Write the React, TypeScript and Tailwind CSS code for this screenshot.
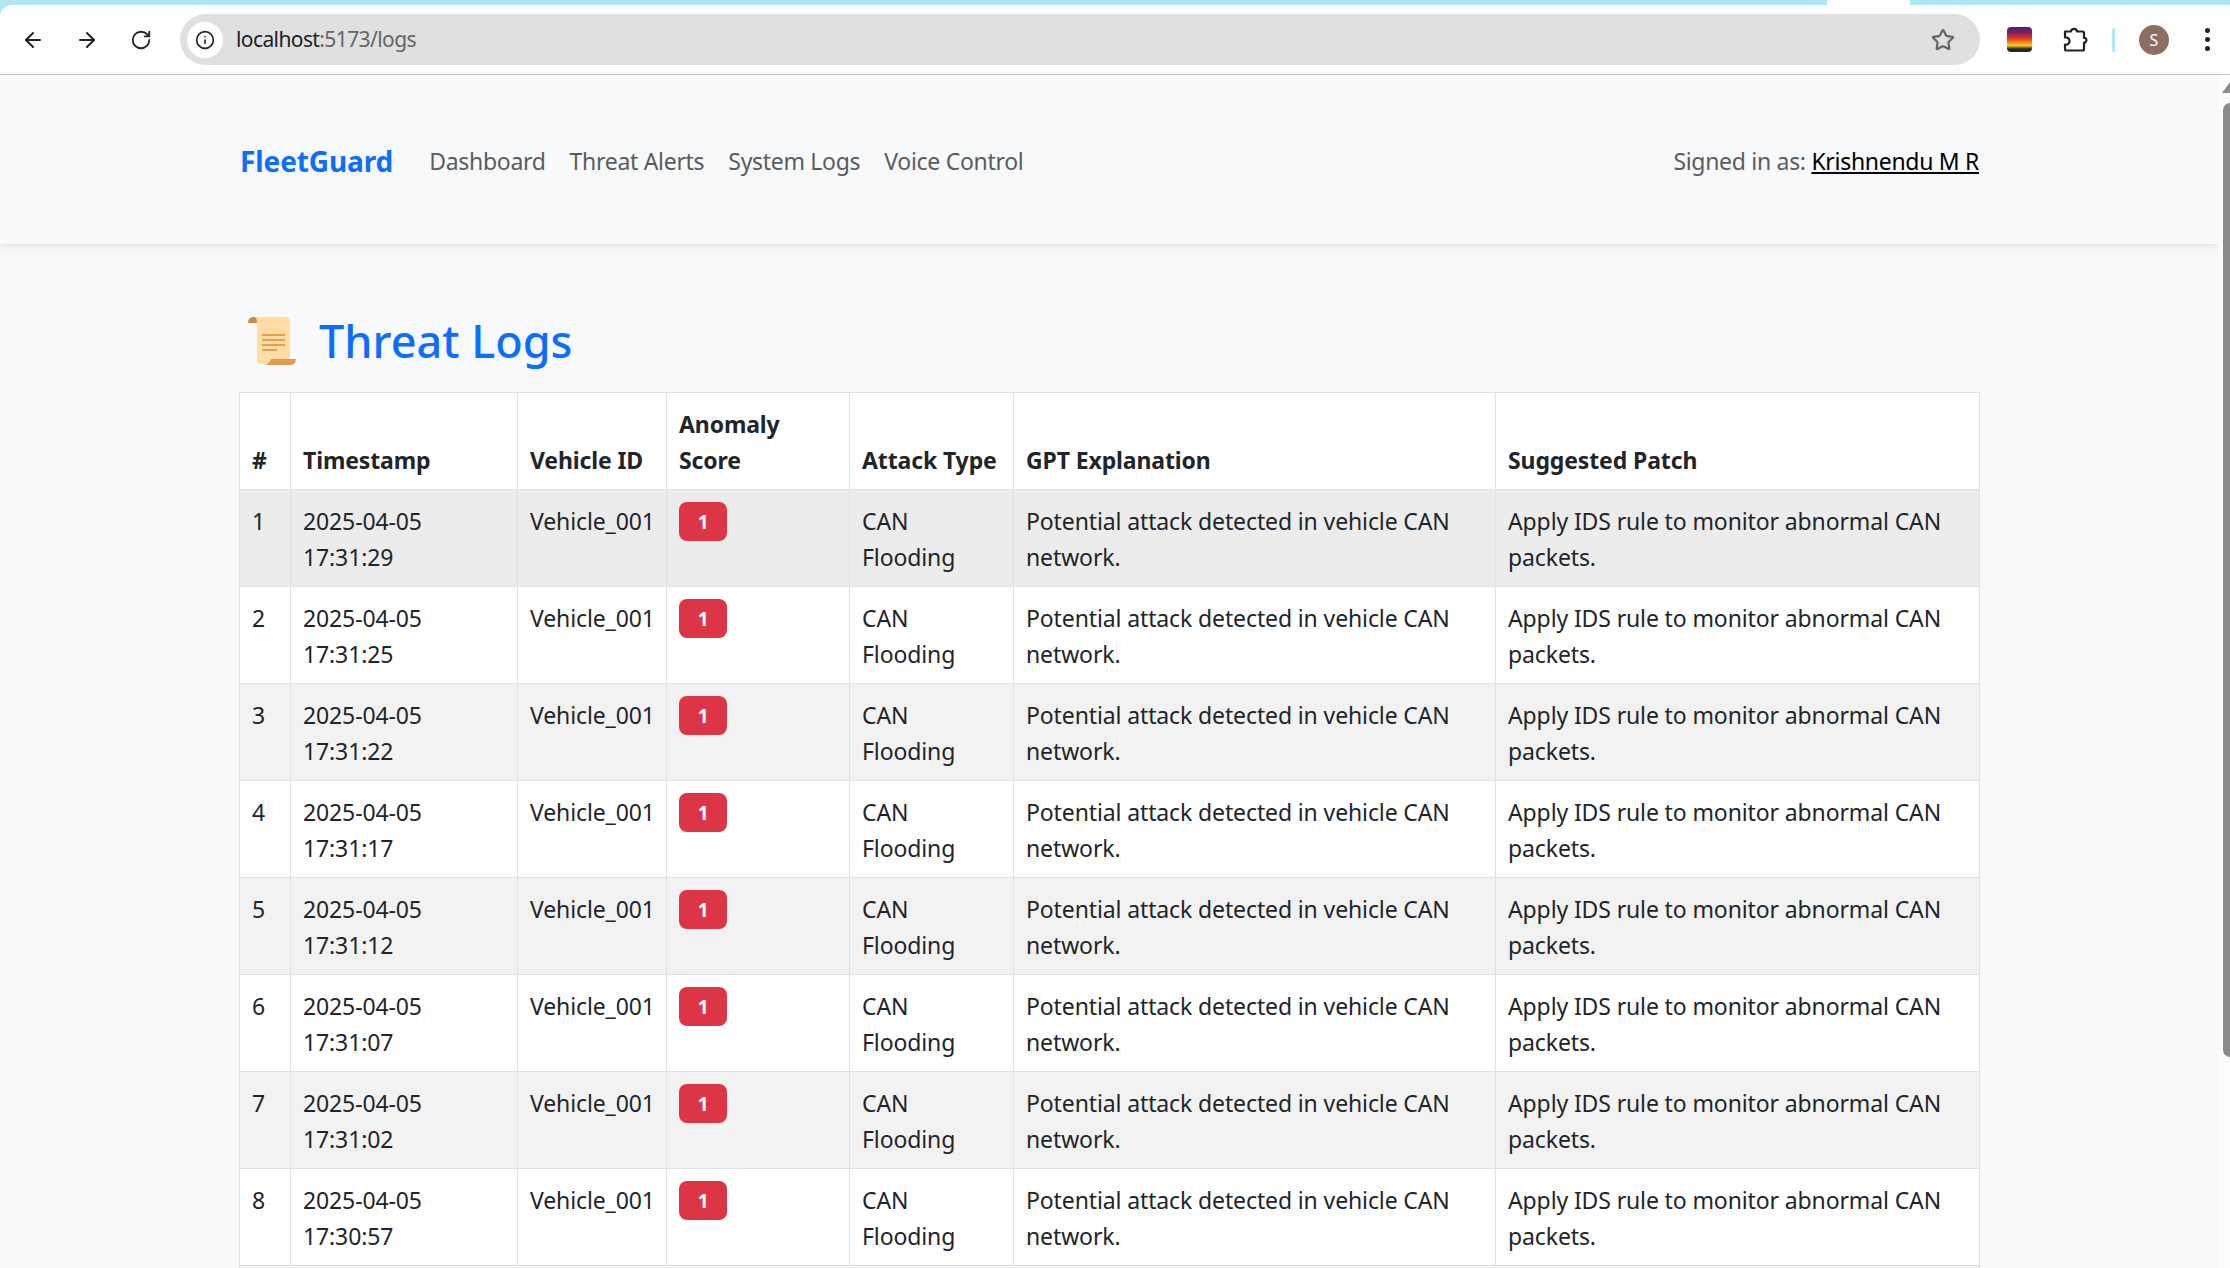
import { ArrowLeft, ArrowRight, RotateCw, Info, Star } from 'lucide-react';

const logs = [
  { id: 1, time: '17:31:29' },
  { id: 2, time: '17:31:25' },
  { id: 3, time: '17:31:22' },
  { id: 4, time: '17:31:17' },
  { id: 5, time: '17:31:12' },
  { id: 6, time: '17:31:07' },
  { id: 7, time: '17:31:02' },
  { id: 8, time: '17:30:57' },
];

function ScrollIcon() {
  return (
    <svg width="48" height="48" viewBox="0 0 48 48" className="shrink-0">
      <path d="M4 0h33a5 5 0 0 1 5 5v42H13a4 4 0 0 1-4-4V6z" fill="#ffdca3" />
      <path d="M0 6c0-4 3-6 5-6 3 0 4 2 4 6z" fill="#c98a4b" />
      <path d="M17 48c3-1 5-3 6-6h25c0 3-2 6-5 6z" fill="#e19a4d" />
      <path d="M14 18h23M14 23h23M14 28h23M14 33h15" stroke="#d98c3e" strokeWidth="1.7" />
    </svg>
  );
}

function ExtensionIcon() {
  return (
    <svg width="26" height="26" viewBox="0 0 26 26" className="shrink-0">
      <path
        d="M2 4.5h6c.4-3.5 5.6-3.5 6 0h5.5A1.5 1.5 0 0 1 21 6v5c3.200-.5 3.200 5 0 4.500V22a1.500 1.500 0 0 1-1.500 1.500H3.500A1.500 1.500 0 0 1 2 22v-4.500c3 .5 4.500-1.500 4.500-3.500S5 10.200 2 10.500z"
        fill="none"
        stroke="#222"
        strokeWidth="2.200"
        strokeLinejoin="round"
      />
    </svg>
  );
}

export default function App() {
  const td = 'border border-[#dee2e6] px-3 pt-[13px] pb-[11px] align-top';
  const th = 'border border-[#dee2e6] px-3 pt-[13px] pb-[11px] align-bottom text-left font-bold';

  return (
    <div className="h-screen overflow-hidden bg-[#f8f9fa] text-[#212529] font-['Noto_Sans','Open_Sans',sans-serif] flex flex-col">
      {/* Browser chrome */}
      <div className="h-[75px] shrink-0 bg-[#b3e6f3] flex flex-col">
        <div className="h-[5px] flex">
          <div className="w-[1827px] rounded-br-md bg-[#b3e6f3]" />
          <div className="w-[83px] bg-white" />
          <div className="flex-1 rounded-bl-md bg-[#b3e6f3]" />
        </div>
        <div className="flex-1 flex items-center bg-white rounded-tl-xl border-b border-[#c9c9c9] pl-[21px]">
          <ArrowLeft size={24} strokeWidth={2} className="text-[#222]" />
          <ArrowRight size={24} strokeWidth={2} className="ml-[30px] text-[#222]" />
          <RotateCw size={22} strokeWidth={2} className="ml-[31px] text-[#222]" />
          <div className="ml-[28px] w-[1800px] h-[51px] rounded-full bg-[#e0e0e0] flex items-center pl-[7px] pr-[25px]">
            <div className="w-[36px] h-[36px] rounded-full bg-white flex items-center justify-center">
              <Info size={20} className="text-[#222]" />
            </div>
            <span className="ml-[13px] text-[21px] tracking-[-0.6px]">
              <span className="text-[#222]">localhost</span>
              <span className="text-[#666]">:5173/logs</span>
            </span>
            <Star size={24} strokeWidth={2.2} className="ml-auto text-[#666]" />
          </div>
          <div className="ml-[27px] w-[25px] h-[25px] rounded-sm bg-[linear-gradient(#4c1d80_0%,#7a2060_20%,#d0312d_42%,#f97316_58%,#facc15_74%,#1f2937_88%)]" />
          <div className="ml-[31px]">
            <ExtensionIcon />
          </div>
          <div className="ml-[23px] w-[3px] h-[24px] rounded-full bg-[#b3e6f3]" />
          <div className="ml-[24px] w-[30px] h-[30px] rounded-full bg-[#8d6e63] text-white text-base flex items-center justify-center">
            S
          </div>
          <div className="ml-[36px] flex flex-col gap-[4px]">
            <span className="w-[5px] h-[5px] rounded-full bg-[#222]" />
            <span className="w-[5px] h-[5px] rounded-full bg-[#222]" />
            <span className="w-[5px] h-[5px] rounded-full bg-[#222]" />
          </div>
        </div>
      </div>

      <div className="flex-1 min-h-0 flex">
        <div className="flex-1 min-w-0">
          {/* Navbar */}
          <nav className="h-[169px] shadow-[0_2px_8px_rgba(0,0,0,0.1)] pl-[240px] pr-[239px] pt-[68px] flex items-start justify-between text-[23px] tracking-[-0.3px] leading-[36px]">
            <div className="flex items-center">
              <a className="text-[28px] font-bold tracking-[-0.1px] text-[#0d6efd] mr-[36px]">FleetGuard</a>
              <a className="text-[#595c5f] mr-[24px]">Dashboard</a>
              <a className="text-[#595c5f] mr-[24px]">Threat Alerts</a>
              <a className="text-[#595c5f] mr-[24px]">System Logs</a>
              <a className="text-[#595c5f]">Voice Control</a>
            </div>
            <div className="text-[#595c5f]">
              Signed in as: <a className="text-black underline">Krishnendu M R</a>
            </div>
          </nav>

          {/* Main */}
          <main className="pl-[239px] pr-[239px] pt-[68px]">
            <h1 className="flex items-center text-[45px] leading-[58px] font-medium text-[#0d6efd] pl-[9px] mb-[22px]">
              <ScrollIcon />
              <span className="ml-[23px]">Threat Logs</span>
            </h1>
            <table className="w-[1740px] table-fixed border-collapse bg-white text-[23px] tracking-[-0.12px] leading-[36px]">
              <colgroup>
                <col className="w-[51px]" />
                <col className="w-[227px]" />
                <col className="w-[149px]" />
                <col className="w-[183px]" />
                <col className="w-[164px]" />
                <col className="w-[482px]" />
                <col className="w-[484px]" />
              </colgroup>
              <thead>
                <tr>
                  <th className={th}>#</th>
                  <th className={th}>Timestamp</th>
                  <th className={th}>Vehicle ID</th>
                  <th className={th}>Anomaly Score</th>
                  <th className={th}>Attack Type</th>
                  <th className={th}>GPT Explanation</th>
                  <th className={th}>Suggested Patch</th>
                </tr>
              </thead>
              <tbody>
                {logs.map((row, i) => (
                  <tr key={row.id} className={i === 0 ? 'bg-[#ececec]' : i % 2 === 0 ? 'bg-[#f2f2f2]' : 'bg-white'}>
                    <td className={td}>{row.id}</td>
                    <td className={td}>
                      2025-04-05
                      <br />
                      {row.time}
                    </td>
                    <td className={td}>Vehicle_001</td>
                    <td className={td}>
                      <span className="mt-[-1px] flex w-[48px] h-[39px] items-center justify-center rounded-lg bg-[#dc3545] text-white text-[19px] font-bold">
                        1
                      </span>
                    </td>
                    <td className={td}>CAN Flooding</td>
                    <td className={td}>Potential attack detected in vehicle CAN network.</td>
                    <td className={td}>Apply IDS rule to monitor abnormal CAN packets.</td>
                  </tr>
                ))}
                {/* next row starts right at the bottom edge */}
                <tr className="h-[97px] bg-[#f2f2f2]">
                  <td className={td} colSpan={7} />
                </tr>
              </tbody>
            </table>
          </main>
        </div>

        {/* Scrollbar, cut off by the right edge of the capture */}
        <div className="w-[12px] shrink-0 overflow-hidden bg-[#fdfdfd] pl-[4px]">
          <div className="mt-[7px] w-0 h-0 border-x-[8px] border-x-transparent border-b-[11px] border-b-[#8a8a8a]" />
          <div className="mt-[10px] ml-[1px] w-[14px] h-[954px] rounded-full bg-[#8a8a8a]" />
        </div>
      </div>
    </div>
  );
}
